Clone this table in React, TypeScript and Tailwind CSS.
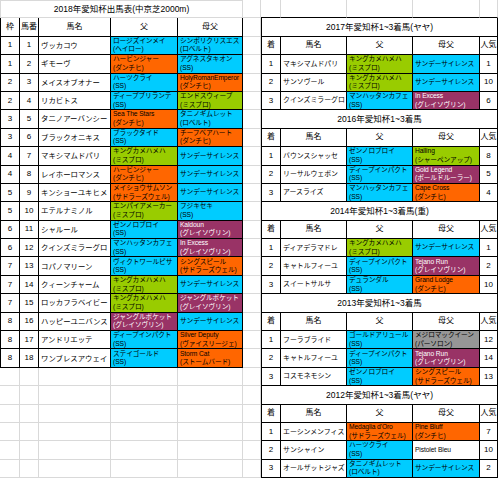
type Col = "c" | "o" | "l" | "p" | "g" | "w";
type Blood = [string, string | null, Col];

const fill: Record<Col, string> = {
  c: "bg-[#00ccff] text-black",
  o: "bg-[#ff6600] text-black",
  l: "bg-[#99cc00] text-black",
  p: "bg-[#993366] text-white",
  g: "bg-[#969696] text-black",
  w: "bg-white text-black",
};

const b = (name: string, sub: string | null, col: Col): Blood => [name, sub, col];
const SS = "サンデーサイレンス";

const entries: { waku: number; no: number; name: string; sire: Blood; dam: Blood }[] = [
  { waku: 1, no: 1, name: "ヴッカコウ", sire: b("ロージズインメイ", "ヘイロー", "c"), dam: b("シンボリクリスエス", "ロベルト", "c") },
  { waku: 1, no: 2, name: "ギモーヴ", sire: b("ハービンジャー", "ダンチヒ", "o"), dam: b("アグネスタキオン", "SS", "c") },
  { waku: 2, no: 3, name: "メイスオブオナー", sire: b("ハーツクライ", "SS", "c"), dam: b("HolyRomanEmperor", "ダンチヒ", "o") },
  { waku: 2, no: 4, name: "リカビトス", sire: b("ディープブリランテ", "SS", "c"), dam: b("エンドスウィープ", "ミスプロ", "l") },
  { waku: 3, no: 5, name: "タニノアーバンシー", sire: b("Sea The Stars", "ダンチヒ", "o"), dam: b("タニノギムレット", "ロベルト", "c") },
  { waku: 3, no: 6, name: "ブラックオニキス", sire: b("ブラックタイド", "SS", "c"), dam: b("チーフベアハート", "ダンチヒ", "o") },
  { waku: 4, no: 7, name: "マキシマムドパリ", sire: b("キングカメハメハ", "ミスプロ", "l"), dam: b(SS, null, "c") },
  { waku: 4, no: 8, name: "レイホーロマンス", sire: b("ハービンジャー", "ダンチヒ", "o"), dam: b(SS, null, "c") },
  { waku: 5, no: 9, name: "キンショーユキヒメ", sire: b("メイショウサムソン", "サドラーズウェル", "o"), dam: b(SS, null, "c") },
  { waku: 5, no: 10, name: "エテルナミノル", sire: b("エンパイアメーカー", "ミスプロ", "l"), dam: b("フジキセキ", "SS", "c") },
  { waku: 6, no: 11, name: "シャルール", sire: b("ゼンノロブロイ", "SS", "c"), dam: b("Kaldoun", "グレイソヴリン", "p") },
  { waku: 6, no: 12, name: "クインズミラーグロ", sire: b("マンハッタンカフェ", "SS", "c"), dam: b("In Excess", "グレイソヴリン", "p") },
  { waku: 7, no: 13, name: "コパノマリーン", sire: b("ヴィクトワールピサ", "SS", "c"), dam: b("シングスピール", "サドラーズウェル", "o") },
  { waku: 7, no: 14, name: "クィーンチャーム", sire: b("キングカメハメハ", "ミスプロ", "l"), dam: b(SS, null, "c") },
  { waku: 7, no: 15, name: "ロッカフラベイビー", sire: b("キングカメハメハ", "ミスプロ", "l"), dam: b("ジャングルポケット", "グレイソヴリン", "p") },
  { waku: 8, no: 16, name: "ハッピーユニバンス", sire: b("ジャングルポケット", "グレイソヴリン", "p"), dam: b(SS, null, "c") },
  { waku: 8, no: 17, name: "アンドリエッテ", sire: b("ディープインパクト", "SS", "c"), dam: b("Silver Deputy", "ヴァイスリージェ", "o") },
  { waku: 8, no: 18, name: "ワンブレスアウェイ", sire: b("ステイゴールド", "SS", "c"), dam: b("Storm Cat", "ストームバード", "o") },
];

type Past = { pos: number; name: string; sire: Blood; dam: Blood; pop: number };

const past: { title: string; rows: Past[] }[] = [
  {
    title: "2017年愛知杯1~3着馬(ヤヤ)",
    rows: [
      { pos: 1, name: "マキシマムドパリ", sire: b("キングカメハメハ", "ミスプロ", "l"), dam: b(SS, null, "c"), pop: 1 },
      { pos: 2, name: "サンソヴール", sire: b("キングカメハメハ", "ミスプロ", "l"), dam: b(SS, null, "c"), pop: 10 },
      { pos: 3, name: "クインズミラーグロ", sire: b("マンハッタンカフェ", "SS", "c"), dam: b("In Excess", "グレイソヴリン", "p"), pop: 6 },
    ],
  },
  {
    title: "2016年愛知杯1~3着馬",
    rows: [
      { pos: 1, name: "バウンスシャッセ", sire: b("ゼンノロブロイ", "SS", "c"), dam: b("Halling", "シャーペンアップ", "l"), pop: 8 },
      { pos: 2, name: "リーサルウェポン", sire: b("ディープインパクト", "SS", "c"), dam: b("Gold Legend", "ボールドルーラー", "p"), pop: 5 },
      { pos: 3, name: "アースライズ", sire: b("マンハッタンカフェ", "SS", "c"), dam: b("Cape Cross", "ダンチヒ", "o"), pop: 4 },
    ],
  },
  {
    title: "2014年愛知杯1~3着馬(重)",
    rows: [
      { pos: 1, name: "ディアデラマドレ", sire: b("キングカメハメハ", "ミスプロ", "l"), dam: b(SS, null, "c"), pop: 1 },
      { pos: 2, name: "キャトルフィーユ", sire: b("ディープインパクト", "SS", "c"), dam: b("Tejano Run", "グレイソヴリン", "p"), pop: 2 },
      { pos: 3, name: "スイートサルサ", sire: b("デュランダル", "SS", "c"), dam: b("Grand Lodge", "ダンチヒ", "o"), pop: 10 },
    ],
  },
  {
    title: "2013年愛知杯1~3着馬",
    rows: [
      { pos: 1, name: "フーラブライド", sire: b("ゴールドアリュール", "SS", "c"), dam: b("メジロマックイーン", "パーソロン", "g"), pop: 12 },
      { pos: 2, name: "キャトルフィーユ", sire: b("ディープインパクト", "SS", "c"), dam: b("Tejano Run", "グレイソヴリン", "p"), pop: 14 },
      { pos: 3, name: "コスモネモシン", sire: b("ゼンノロブロイ", "SS", "c"), dam: b("シングスピール", "サドラーズウェル", "o"), pop: 13 },
    ],
  },
  {
    title: "2012年愛知杯1~3着馬(ヤヤ)",
    rows: [
      { pos: 1, name: "エーシンメンフィス", sire: b("Medaglia d'Oro", "サドラーズウェル", "o"), dam: b("Pine Bluff", "ダンチヒ", "o"), pop: 7 },
      { pos: 2, name: "サンシャイン", sire: b("ハーツクライ", "SS", "c"), dam: b("Pistolet Bleu", null, "w"), pop: 10 },
      { pos: 3, name: "オールザットジャズ", sire: b("タニノギムレット", "ロベルト", "c"), dam: b(SS, null, "c"), pop: 2 },
    ],
  },
];

const cell = "border-r border-b border-black overflow-hidden whitespace-nowrap";
const grid = "border-r border-b border-[#d9d9d9]";

function BloodCell({ v }: { v: Blood }) {
  const [name, sub, col] = v;
  return (
    <div className={`${cell} ${fill[col]} flex flex-col justify-center pl-[2px] text-[6.7px] leading-[8.6px] tracking-[-0.1px]`}>
      <div>{name}</div>
      {sub && <div>({sub})</div>}
    </div>
  );
}

function Num({ children }: { children: React.ReactNode }) {
  return <div className={`${cell} flex items-center justify-center text-[8px]`}>{children}</div>;
}

function Name({ children, small }: { children: React.ReactNode; small?: boolean }) {
  return (
    <div className={`${cell} flex items-center pl-[2px] ${small ? "text-[6.9px]" : "text-[7.4px]"}`}>
      {children}
    </div>
  );
}

function Head({ children }: { children: React.ReactNode }) {
  return <div className={`${cell} flex items-center justify-center text-[8px]`}>{children}</div>;
}

export default function App() {
  return (
    <div className="flex w-[499px] h-[479px] overflow-hidden bg-white text-black font-['Liberation_Sans','Noto_Sans_CJK_JP',sans-serif]">
      {/* 2018 entries */}
      <div className="w-[243px] shrink-0 grid grid-cols-[20px_19px_72px_67px_65px] auto-rows-[18.4px]">
        <div className={`col-span-5 ${grid} border-l border-t flex items-center justify-center text-[8.5px]`}>
          2018年愛知杯出馬表(中京芝2000m)
        </div>
        <div className="col-span-5 grid grid-cols-subgrid border-l border-black">
          <Head>枠</Head>
          <Head>馬番</Head>
          <Head>馬名</Head>
          <Head>父</Head>
          <Head>母父</Head>
        </div>
        {entries.map((e) => (
          <div key={e.no} className="col-span-5 grid grid-cols-subgrid border-l border-black">
            <Num>{e.waku}</Num>
            <Num>{e.no}</Num>
            <Name>{e.name}</Name>
            <BloodCell v={e.sire} />
            <BloodCell v={e.dam} />
          </div>
        ))}
        {Array.from({ length: 6 }).map((_, r) =>
          [0, 1, 2, 3, 4].map((c) => <div key={`${r}-${c}`} className={grid} />)
        )}
      </div>

      {/* spacer column */}
      <div className="w-[18px] shrink-0 flex flex-col">
        {Array.from({ length: 26 }).map((_, i) => (
          <div key={i} className={`h-[18.4px] shrink-0 ${grid}`} />
        ))}
      </div>

      {/* past results */}
      <div className="w-[238px] shrink-0 grid grid-cols-[20px_66px_66px_67px_18px] auto-rows-[18.4px]">
        {[0, 1, 2, 3, 4].map((c) => (
          <div key={c} className={`${grid} border-b-black`} />
        ))}
        {past.map((s) => (
          <div key={s.title} className="col-span-5 grid grid-cols-subgrid row-span-5 grid-rows-subgrid border-l border-black">
            <div className={`col-span-5 ${cell} flex items-center justify-center text-[8.5px]`}>{s.title}</div>
            <Head>着</Head>
            <Head>馬名</Head>
            <Head>父</Head>
            <Head>母父</Head>
            <Head>人気</Head>
            {s.rows.map((r) => (
              <div key={r.pos} className="col-span-5 grid grid-cols-subgrid">
                <Num>{r.pos}</Num>
                <Name small>{r.name}</Name>
                <BloodCell v={r.sire} />
                <BloodCell v={r.dam} />
                <Num>{r.pop}</Num>
              </div>
            ))}
          </div>
        ))}
      </div>
    </div>
  );
}
